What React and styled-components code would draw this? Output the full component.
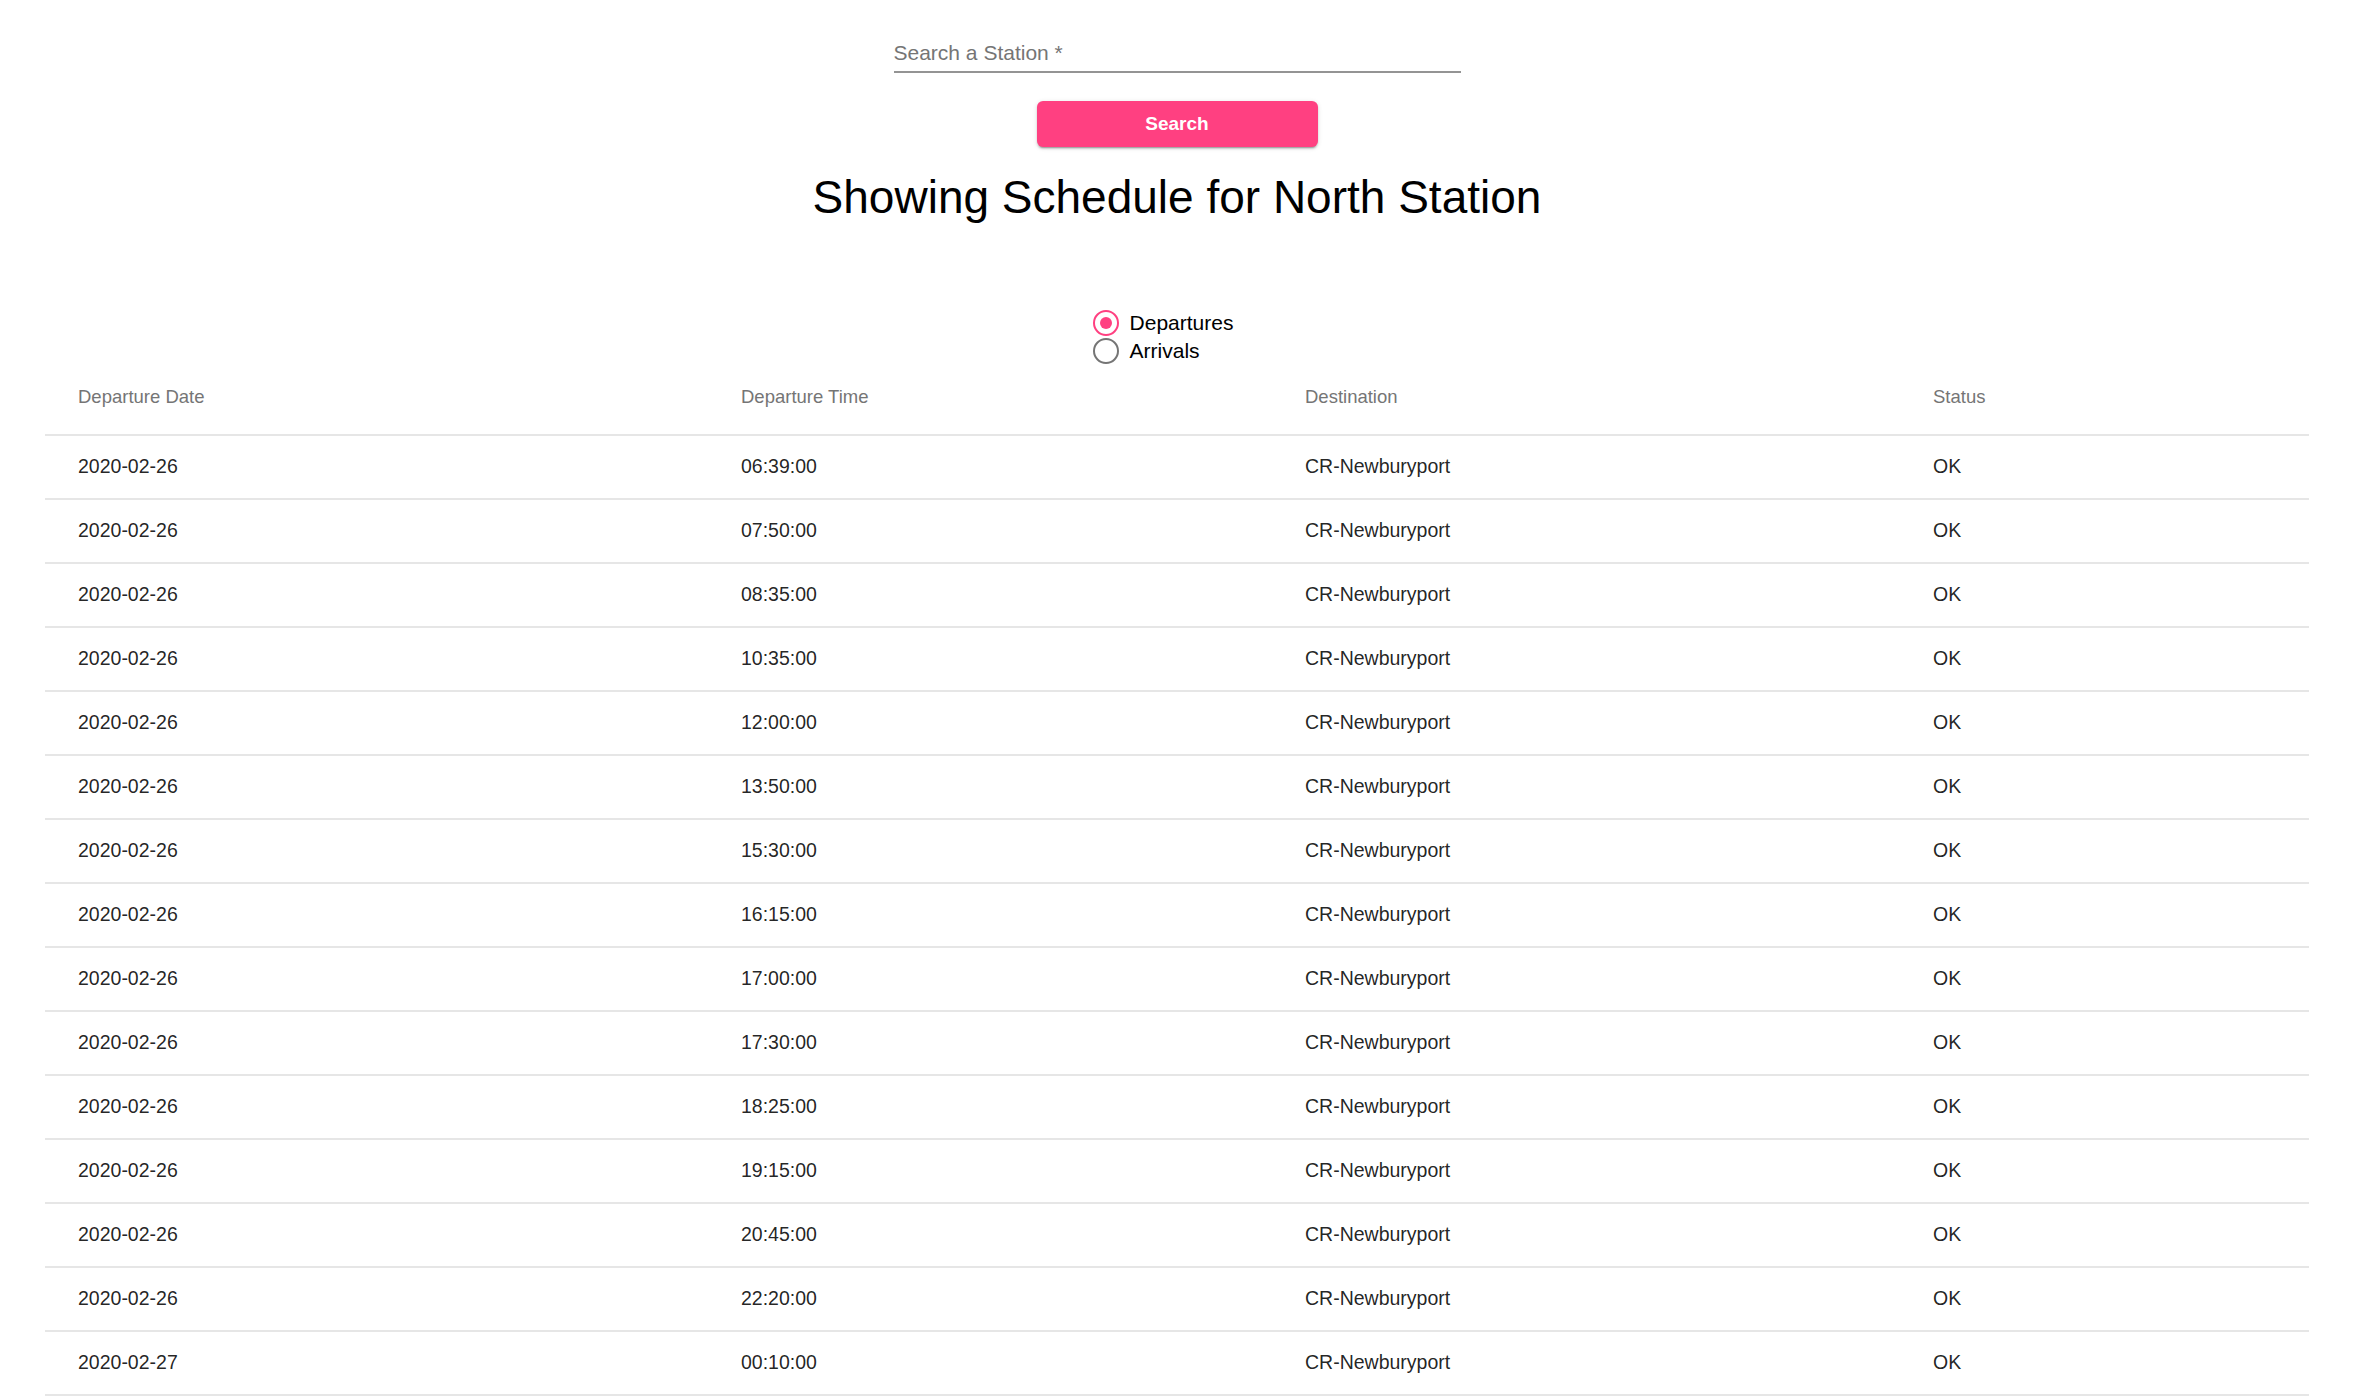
import React, { useState } from "react";
import styled, { createGlobalStyle } from "styled-components";

const GlobalStyle = createGlobalStyle`
  body {
    margin: 0;
    background: #ffffff;
    font-family: "Liberation Sans", Helvetica, Arial, sans-serif;
    color: rgba(0, 0, 0, 0.87);
  }
`;

const Page = styled.div`
  display: flex;
  flex-direction: column;
  align-items: center;
  padding: 0 49px 0 45px;
`;

const Field = styled.label`
  display: flex;
  width: 567px;
  padding: 41px 0 6px 0;
  border-bottom: 2px solid #949494;
  box-sizing: border-box;
`;

const Input = styled.input`
  width: 100%;
  border: none;
  outline: none;
  padding: 0;
  font-family: inherit;
  font-size: 21px;
  line-height: 24px;
  height: 24px;
  color: rgba(0, 0, 0, 0.87);
  background: transparent;

  &::placeholder {
    color: #757575;
  }
`;

const Button = styled.button`
  margin-top: 28px;
  width: 281px;
  height: 46px;
  border: none;
  border-radius: 6px;
  background-color: #ff4081;
  color: #ffffff;
  font-family: inherit;
  font-size: 19px;
  font-weight: bold;
  cursor: pointer;
  box-shadow: 0px 3px 1px -2px rgba(0, 0, 0, 0.2),
    0px 2px 2px 0px rgba(0, 0, 0, 0.14), 0px 1px 5px 0px rgba(0, 0, 0, 0.12);
`;

const Title = styled.h1`
  margin: 23px 0 0 0;
  font-size: 46px;
  line-height: 54px;
  font-weight: normal;
  color: #000000;
`;

const RadioGroup = styled.div`
  display: flex;
  flex-direction: column;
  margin-top: 85px;
  padding-right: 28px;
`;

const RadioLabel = styled.label`
  display: flex;
  align-items: center;
  height: 28px;
  font-size: 21px;
  color: #000000;
  cursor: pointer;
`;

const RadioCircle = styled.span`
  display: flex;
  align-items: center;
  justify-content: center;
  width: 26px;
  height: 26px;
  margin-right: 11px;
  border-radius: 50%;
  box-sizing: border-box;
  border: 2.5px solid ${({ checked }) => (checked ? "#ff4081" : "#757575")};

  &::after {
    content: "";
    width: 12px;
    height: 12px;
    border-radius: 50%;
    background: #ff4081;
    display: ${({ checked }) => (checked ? "block" : "none")};
  }
`;

const Table = styled.table`
  width: 100%;
  border-collapse: collapse;
  table-layout: fixed;
`;

const HeadCell = styled.th`
  text-align: left;
  font-weight: normal;
  font-size: 18.5px;
  line-height: 23px;
  color: #757575;
  padding: 20px 10px 26px 33px;
  border-bottom: 2px solid #e6e6e6;
`;

const Cell = styled.td`
  font-size: 19.5px;
  line-height: 23px;
  color: rgba(0, 0, 0, 0.87);
  padding: 19px 10px 20px 33px;
  border-bottom: 2px solid #e6e6e6;
`;

const columns = [
  { label: "Departure Date", width: 663 },
  { label: "Departure Time", width: 564 },
  { label: "Destination", width: 628 },
  { label: "Status", width: 409 },
];

const times = [
  "06:39:00",
  "07:50:00",
  "08:35:00",
  "10:35:00",
  "12:00:00",
  "13:50:00",
  "15:30:00",
  "16:15:00",
  "17:00:00",
  "17:30:00",
  "18:25:00",
  "19:15:00",
  "20:45:00",
  "22:20:00",
  "00:10:00",
];

const rows = times.map((time, i) => ({
  date: i === times.length - 1 ? "2020-02-27" : "2020-02-26",
  time,
  destination: "CR-Newburyport",
  status: "OK",
}));

const App = () => {
  const [mode, setMode] = useState("departures");

  return (
    <Page>
      <GlobalStyle />
      <Field>
        <Input placeholder="Search a Station *" />
      </Field>
      <Button>Search</Button>
      <Title>Showing Schedule for North Station</Title>
      <RadioGroup>
        <RadioLabel onClick={() => setMode("departures")}>
          <RadioCircle checked={mode === "departures"} />
          Departures
        </RadioLabel>
        <RadioLabel onClick={() => setMode("arrivals")}>
          <RadioCircle checked={mode === "arrivals"} />
          Arrivals
        </RadioLabel>
      </RadioGroup>
      <Table>
        <colgroup>
          {columns.map((col) => (
            <col key={col.label} style={{ width: col.width }} />
          ))}
        </colgroup>
        <thead>
          <tr>
            {columns.map((col) => (
              <HeadCell key={col.label}>{col.label}</HeadCell>
            ))}
          </tr>
        </thead>
        <tbody>
          {rows.map((row, i) => (
            <tr key={i}>
              <Cell>{row.date}</Cell>
              <Cell>{row.time}</Cell>
              <Cell>{row.destination}</Cell>
              <Cell>{row.status}</Cell>
            </tr>
          ))}
        </tbody>
      </Table>
    </Page>
  );
};

export default App;
